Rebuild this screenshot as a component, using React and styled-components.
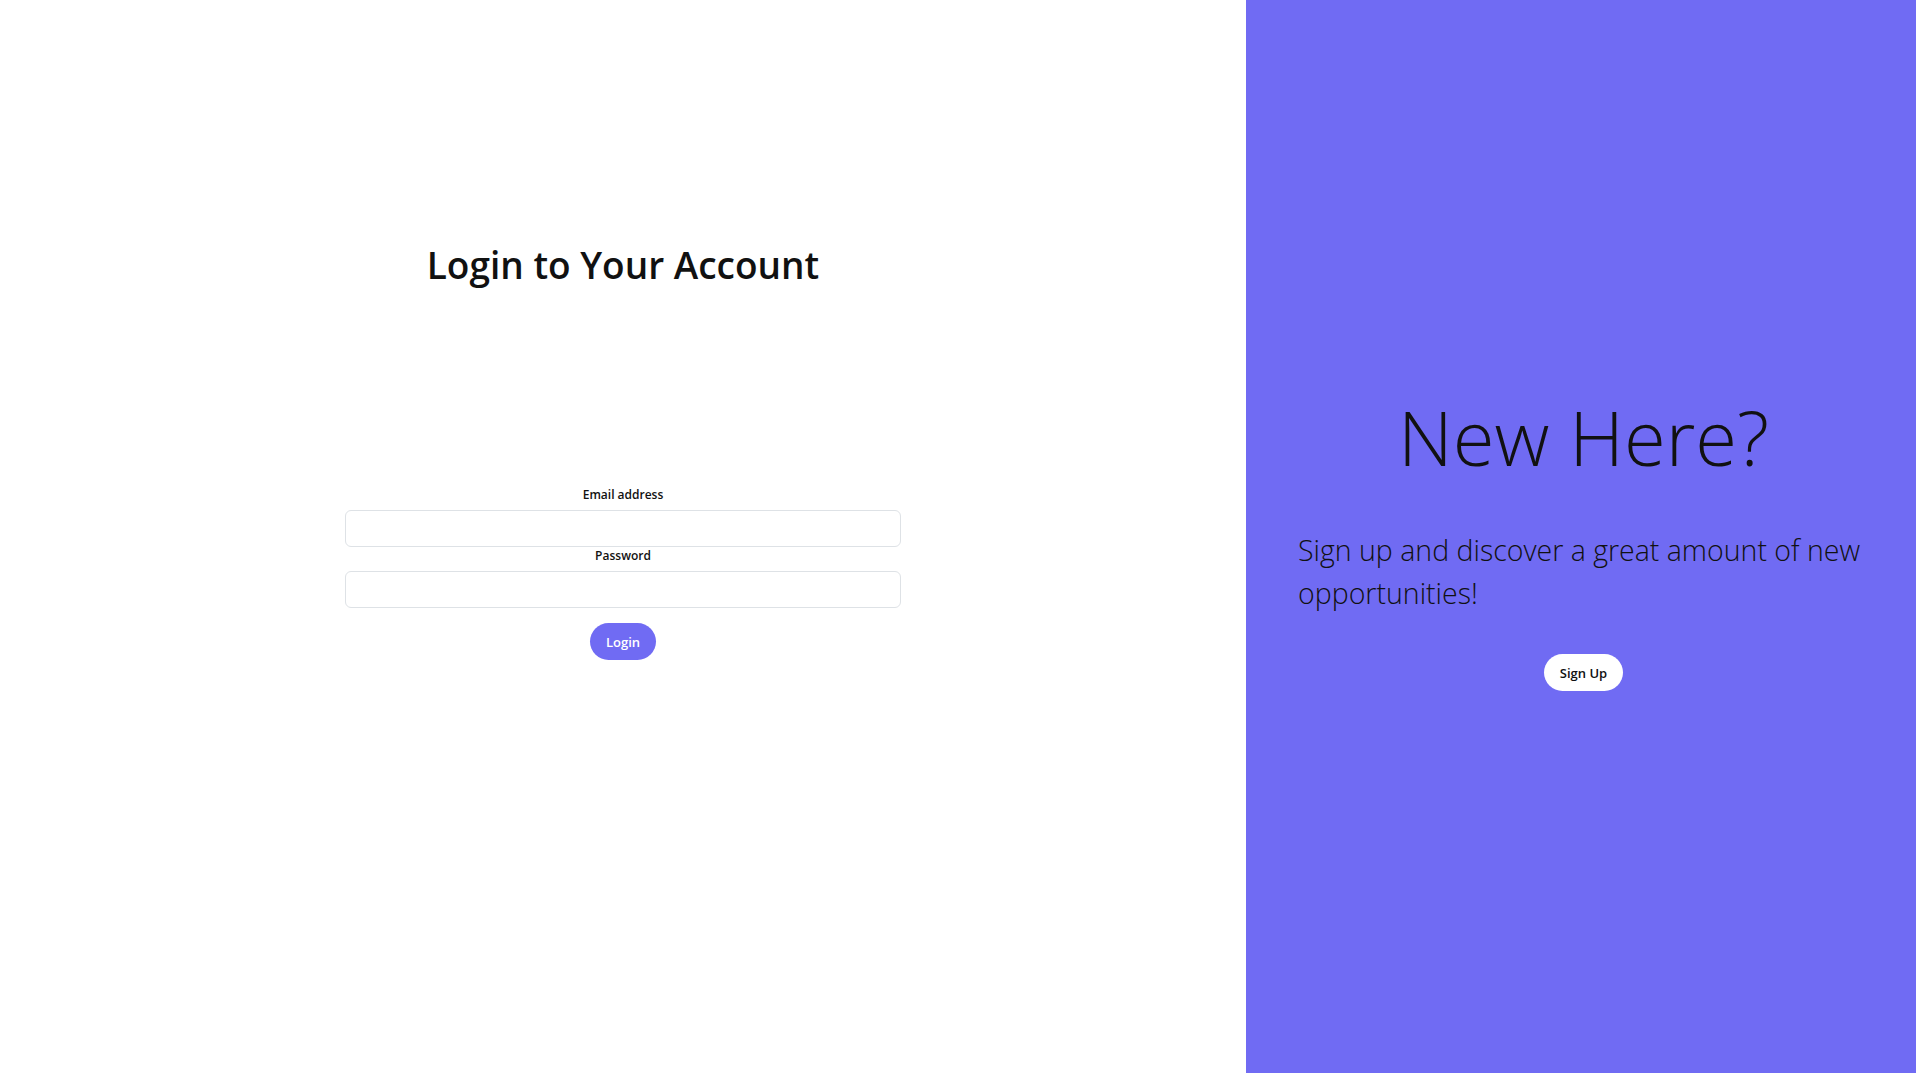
import React from "react";
import styled, { createGlobalStyle } from "styled-components";

const GlobalStyle = createGlobalStyle`
  * { box-sizing: border-box; }
  body {
    margin: 0;
    font-family: "Open Sans", "Noto Sans", sans-serif;
    color: #111;
    background: #fff;
  }
`;

const Page = styled.div`
  display: flex;
  width: 100%;
  height: 100vh;
`;

const LoginSide = styled.section`
  flex: 0 0 1246px;
  display: flex;
  flex-direction: column;
  align-items: center;
  padding-top: 243px;
`;

const Title = styled.h1`
  margin: 0;
  font-size: 37px;
  font-weight: 600;
  line-height: 1.2;
`;

const Form = styled.form`
  width: 556px;
  margin-top: 199px;
  display: flex;
  flex-direction: column;
  align-items: center;
`;

const Label = styled.label`
  font-size: 12px;
  font-weight: 600;
  line-height: 1.5;
  margin-bottom: 6px;
`;

const Input = styled.input`
  width: 100%;
  height: 37px;
  border: 1px solid #dee2e6;
  border-radius: 6px;
  padding: 6px 12px;
  font-size: 15px;
  outline: none;
`;

const PillButton = styled.button`
  border: none;
  border-radius: 999px;
  height: 37px;
  padding: 0 16px;
  font-family: inherit;
  font-size: 13px;
  font-weight: 600;
  cursor: pointer;
  background: ${p => (p.$light ? "#fff" : "#706bf3")};
  color: ${p => (p.$light ? "#111" : "#fff")};
`;

const SignupSide = styled.section`
  flex: 1;
  background: #706bf3;
  display: flex;
  flex-direction: column;
  align-items: center;
  justify-content: center;
  padding: 9px 47px 0 52px;
`;

const BigHeading = styled.h2`
  margin: 0;
  font-size: 76px;
  font-weight: 300;
  line-height: 1.2;
`;

const Pitch = styled.p`
  margin: 47px 0 40px;
  align-self: stretch;
  font-size: 28.5px;
  font-weight: 300;
  line-height: 1.5;
`;

export default function App() {
  return (
    <>
      <GlobalStyle />
      <Page>
        <LoginSide>
          <Title>Login to Your Account</Title>
          <Form onSubmit={e => e.preventDefault()}>
            <Label htmlFor="email">Email address</Label>
            <Input id="email" type="email" />
            <Label htmlFor="password">Password</Label>
            <Input id="password" type="password" />
            <PillButton type="submit" style={{ marginTop: 15 }}>Login</PillButton>
          </Form>
        </LoginSide>
        <SignupSide>
          <BigHeading>New Here?</BigHeading>
          <Pitch>Sign up and discover a great amount of new opportunities!</Pitch>
          <PillButton $light type="button">Sign Up</PillButton>
        </SignupSide>
      </Page>
    </>
  );
}
